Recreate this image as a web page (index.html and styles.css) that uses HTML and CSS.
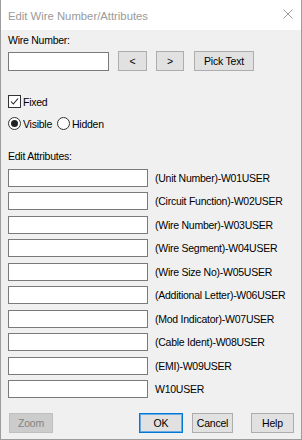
FILE: index.html
```html
<!DOCTYPE html>
<html lang="en">
<head>
    <meta charset="UTF-8">
    <title>Edit Wire Number/Attributes</title>
    <link rel="stylesheet" href="styles.css">
</head>
<body>
    <div class="window">
        <div class="titlebar">
            <span class="title">Edit Wire Number/Attributes</span>
            <svg class="close" width="10" height="10" viewBox="0 0 10 10">
                <path d="M0.5 0.5 L9.5 9.5 M9.5 0.5 L0.5 9.5" stroke="#9a9a9a" stroke-width="1" fill="none"/>
            </svg>
        </div>
        <div class="content">
            <div class="label">Wire Number:</div>
            <div class="wire-row">
                <input type="text" class="field wire-field">
                <button class="btn btn-prev">&lt;</button>
                <button class="btn btn-next">&gt;</button>
                <button class="btn btn-pick">Pick Text</button>
            </div>

            <label class="check-row">
                <span class="checkbox">
                    <svg width="11" height="11" viewBox="0 0 11 11">
                        <path d="M2 5.5 L4.3 8 L9 2.5" stroke="#222" stroke-width="1.1" fill="none"/>
                    </svg>
                </span>
                Fixed
            </label>

            <div class="radio-row">
                <label class="radio-item"><span class="radio checked"></span>Visible</label>
                <label class="radio-item"><span class="radio"></span>Hidden</label>
            </div>

            <div class="label attr-label">Edit Attributes:</div>
            <div class="attrs">
                <input type="text" class="field"><span class="attr-name">(Unit Number)-W01USER</span>
                <input type="text" class="field"><span class="attr-name">(Circuit Function)-W02USER</span>
                <input type="text" class="field"><span class="attr-name">(Wire Number)-W03USER</span>
                <input type="text" class="field"><span class="attr-name">(Wire Segment)-W04USER</span>
                <input type="text" class="field"><span class="attr-name">(Wire Size No)-W05USER</span>
                <input type="text" class="field"><span class="attr-name">(Additional Letter)-W06USER</span>
                <input type="text" class="field"><span class="attr-name">(Mod Indicator)-W07USER</span>
                <input type="text" class="field"><span class="attr-name">(Cable Ident)-W08USER</span>
                <input type="text" class="field"><span class="attr-name">(EMI)-W09USER</span>
                <input type="text" class="field"><span class="attr-name">W10USER</span>
            </div>

            <div class="footer">
                <button class="btn btn-zoom" disabled>Zoom</button>
                <button class="btn btn-ok">OK</button>
                <button class="btn btn-cancel">Cancel</button>
                <button class="btn btn-help">Help</button>
            </div>
        </div>
    </div>
</body>
</html>
```

FILE: styles.css
```css
html, body {
    margin: 0;
    padding: 0;
    background: #f0f0f0;
}
body {
    font-family: "Liberation Sans", Arial, sans-serif;
    font-size: 10.5px;
    letter-spacing: -0.25px;
    color: #000;
}
.window {
    width: 302px;
    height: 440px;
    box-sizing: border-box;
    border: 1px solid #9c9c9c;
    border-top: none;
    background: #f0f0f0;
}
.titlebar {
    height: 30px;
    background: #fff;
    display: flex;
    align-items: center;
    justify-content: space-between;
    padding: 0 8px 0 7px;
}
.title {
    font-size: 11.3px;
    letter-spacing: 0;
    color: #9a9a9a;
    margin-top: 1px;
}
.close {
    margin-top: -2px;
}
.content {
    padding: 4px 7px 0 7px;
}
.label {
    height: 13px;
    line-height: 13px;
}
.field {
    display: block;
    box-sizing: border-box;
    margin: 0;
    padding: 0;
    height: 18px;
    width: 140px;
    border: 1px solid #7a7a7a;
    background: #fff;
    outline: none;
}
.btn {
    box-sizing: border-box;
    margin: 0;
    padding: 0;
    height: 20px;
    font-family: "Liberation Sans", Arial, sans-serif;
    font-size: 10.5px;
    letter-spacing: -0.2px;
    color: #000;
    background: #e1e1e1;
    border: 1px solid #adadad;
    border-radius: 0;
}
.wire-row {
    display: flex;
    align-items: center;
    margin-top: 4px;
    height: 20px;
}
.wire-field {
    width: 101px;
    height: 19px;
}
.btn-prev {
    width: 29px;
    margin-left: 9px;
}
.btn-next {
    width: 28px;
    margin-left: 9px;
}
.btn-pick {
    width: 60px;
    margin-left: 10px;
}
.check-row {
    display: flex;
    align-items: center;
    height: 13px;
    margin-top: 24px;
}
.checkbox {
    box-sizing: border-box;
    width: 13px;
    height: 13px;
    border: 1px solid #333;
    background: #fff;
    margin-right: 2px;
    display: flex;
}
.radio-row {
    display: flex;
    height: 13px;
    margin-top: 9px;
}
.radio-item {
    display: flex;
    align-items: center;
    margin-right: 5px;
}
.radio {
    box-sizing: border-box;
    width: 13px;
    height: 13px;
    border: 1px solid #333;
    border-radius: 50%;
    background: #fff;
    margin-right: 2px;
    display: flex;
    align-items: center;
    justify-content: center;
}
.radio.checked::after {
    content: "";
    width: 7px;
    height: 7px;
    border-radius: 50%;
    background: #222;
}
.attr-label {
    margin-top: 20px;
}
.attrs {
    display: grid;
    grid-template-columns: 140px auto;
    grid-auto-rows: 18px;
    row-gap: 5.45px;
    column-gap: 7px;
    align-items: center;
    margin-top: 6px;
}
.attr-name {
    white-space: nowrap;
}
.footer {
    display: flex;
    margin-top: 15px;
}
.btn-zoom {
    width: 44px;
    margin-left: 1px;
    background: #cccccc;
    border-color: #bfbfbf;
    color: #838383;
}
.btn-ok {
    width: 44px;
    margin-left: auto;
    border-color: #0078d7;
    box-shadow: inset 0 0 0 1px #6aa9e4;
}
.btn-cancel {
    width: 41px;
    margin-left: 9px;
}
.btn-help {
    width: 43px;
    margin-left: 18px;
}
```
